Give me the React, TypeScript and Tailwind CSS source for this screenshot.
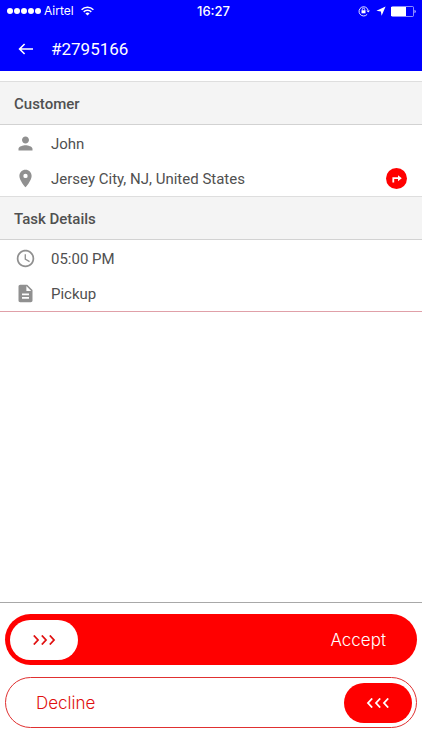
import type { ReactNode } from "react";
import { MdAccessTime, MdDescription, MdPerson, MdPlace } from "react-icons/md";

function StatusBar() {
  return (
    <div className="grid h-[22px] grid-cols-3 items-center pr-[6px] pl-[7px] text-[12px] leading-4 text-white">
      <div className="flex items-center">
        <div className="flex gap-[1px]">
          {[0, 1, 2, 3, 4].map((dot) => (
            <span key={dot} className="size-[6px] rounded-full bg-white" />
          ))}
        </div>
        <span className="ml-[3px]">Airtel</span>
        <svg className="ml-[7px] h-[10px] w-[13px]" viewBox="0 0 13 10" fill="none" stroke="white" strokeWidth="1.5" aria-hidden="true">
          <path d="M0.6 3.7a8.4 8.4 0 0 1 11.8 0" />
          <path d="M2.7 5.9a5.4 5.4 0 0 1 7.6 0" />
          <path d="M6.5 9.6 4.4 7.5a3 3 0 0 1 4.2 0z" fill="white" stroke="none" />
        </svg>
      </div>
      <span className="pl-[4px] text-center text-[13px] font-medium">16:27</span>
      <div className="flex items-center justify-end">
        <svg className="h-[12px] w-[12px]" viewBox="0 0 12 12" fill="none" stroke="white" aria-hidden="true">
          <path d="M9.2 9.3A4.6 4.6 0 1 1 10.1 5.2" strokeWidth="0.9" />
          <path d="M8.4 5.4h3.5L10.2 7.6z" fill="white" stroke="none" />
          <path d="M4.3 5.6V4.4a1.2 1.2 0 0 1 2.4 0v1.2" strokeWidth="0.8" />
          <rect x="3.5" y="5.3" width="4" height="3" fill="white" stroke="none" />
        </svg>
        <svg className="ml-[6px] h-[10px] w-[10px]" viewBox="0 0 10 10" fill="white" aria-hidden="true">
          <path d="M9.6 0.4 5.6 9.8 4.9 5.5 0.4 4.8z" />
        </svg>
        <svg className="ml-[5px] h-[11px] w-[25px]" viewBox="0 0 25 11" aria-hidden="true">
          <rect x="0.5" y="0.5" width="22" height="10" rx="1" fill="none" stroke="white" strokeOpacity="0.55" />
          <rect x="0" y="1" width="15" height="9" fill="white" />
          <path d="M23.6 3.8c1.4 0.4 1.4 3 0 3.4z" fill="white" />
        </svg>
      </div>
    </div>
  );
}

function SectionTitle({ children }: { children: ReactNode }) {
  return (
    <h2 className="flex h-[44px] items-center border-t border-b border-t-[#dedede] border-b-[#d2d2d2] bg-[#f4f4f4] px-[14px] pt-[2px] text-[15px] leading-5 font-medium text-[#505050]">
      {children}
    </h2>
  );
}

function Row({ icon, children, action }: { icon: ReactNode; children: ReactNode; action?: ReactNode }) {
  return (
    <li className="flex h-[35px] items-center px-[15px]">
      <span className="flex w-[21px] justify-center text-[21px] text-[#909090]">{icon}</span>
      <span className="ml-[15px] flex-1 text-[15px] leading-5 text-[#505050]">{children}</span>
      {action}
    </li>
  );
}

function Chevrons({ left = false }: { left?: boolean }) {
  return (
    <svg
      className={left ? "h-[10px] w-[24px] rotate-180" : "h-[10px] w-[24px]"}
      viewBox="0 0 24 10"
      fill="none"
      stroke="currentColor"
      strokeWidth="1.8"
      aria-hidden="true"
    >
      <path d="M1.8 0.5 6 5 1.8 9.5M9.8 0.5 14 5 9.8 9.5M17.8 0.5 22 5 17.8 9.5" />
    </svg>
  );
}

export default function App() {
  return (
    <div className="flex min-h-screen flex-col bg-white font-['Roboto',sans-serif]">
      <header className="bg-[#0000ff] font-['Inter',sans-serif]">
        <StatusBar />
        <div className="flex h-[49px] items-center pt-[4px] pl-[18px] text-white">
          <button type="button" aria-label="Back" className="flex items-center">
            <svg className="h-[12px] w-[16px]" viewBox="0 0 16 12" fill="none" stroke="white" strokeWidth="1.6" aria-hidden="true">
              <path d="M15 6H1.8M6.6 1 1.6 6l5 5" />
            </svg>
          </button>
          <h1 className="ml-[17px] font-['Roboto',sans-serif] text-[17px] leading-6">#2795166</h1>
        </div>
      </header>

      <main className="flex flex-1 flex-col pt-[10px]">
        <section>
          <SectionTitle>Customer</SectionTitle>
          <ul className="pt-[1px]">
            <Row icon={<MdPerson />}>John</Row>
            <Row
              icon={<MdPlace />}
              action={
                <button type="button" aria-label="Get directions" className="flex size-[21px] items-center justify-center rounded-full bg-[#ff0000]">
                  <svg className="h-[8px] w-[10px]" viewBox="0 0 10 8" fill="white" aria-hidden="true">
                    <path d="M0.4 7.4V2.2H6V0.2L9.8 3.2 6 6.2V4H2.2V7.4z" />
                  </svg>
                </button>
              }
            >
              Jersey City, NJ, United States
            </Row>
          </ul>
        </section>
        <section className="border-b border-[#e0a0a8]">
          <SectionTitle>Task Details</SectionTitle>
          <ul className="pt-[1px]">
            <Row icon={<MdAccessTime />}>05:00 PM</Row>
            <Row icon={<MdDescription />}>Pickup</Row>
          </ul>
        </section>
      </main>

      <footer className="flex flex-col gap-[12px] border-t border-[#a8a8a8] px-[5px] pt-[11px] pb-[22px] font-['Inter',sans-serif] text-[17px] leading-6 font-light">
        <button type="button" className="flex h-[51px] items-center justify-between rounded-full bg-[#ff0000] pr-[31px] pl-[5px] text-white">
          <span className="flex h-[40px] w-[68px] items-center justify-center rounded-full bg-white text-[#e01010]">
            <Chevrons />
          </span>
          Accept
        </button>
        <button type="button" className="flex h-[51px] items-center justify-between rounded-full border border-[#e03030] bg-white pr-[4px] pl-[30px] text-[#e01010]">
          Decline
          <span className="flex h-[40px] w-[68px] items-center justify-center rounded-full bg-[#ff0000] text-white">
            <Chevrons left />
          </span>
        </button>
      </footer>
    </div>
  );
}
